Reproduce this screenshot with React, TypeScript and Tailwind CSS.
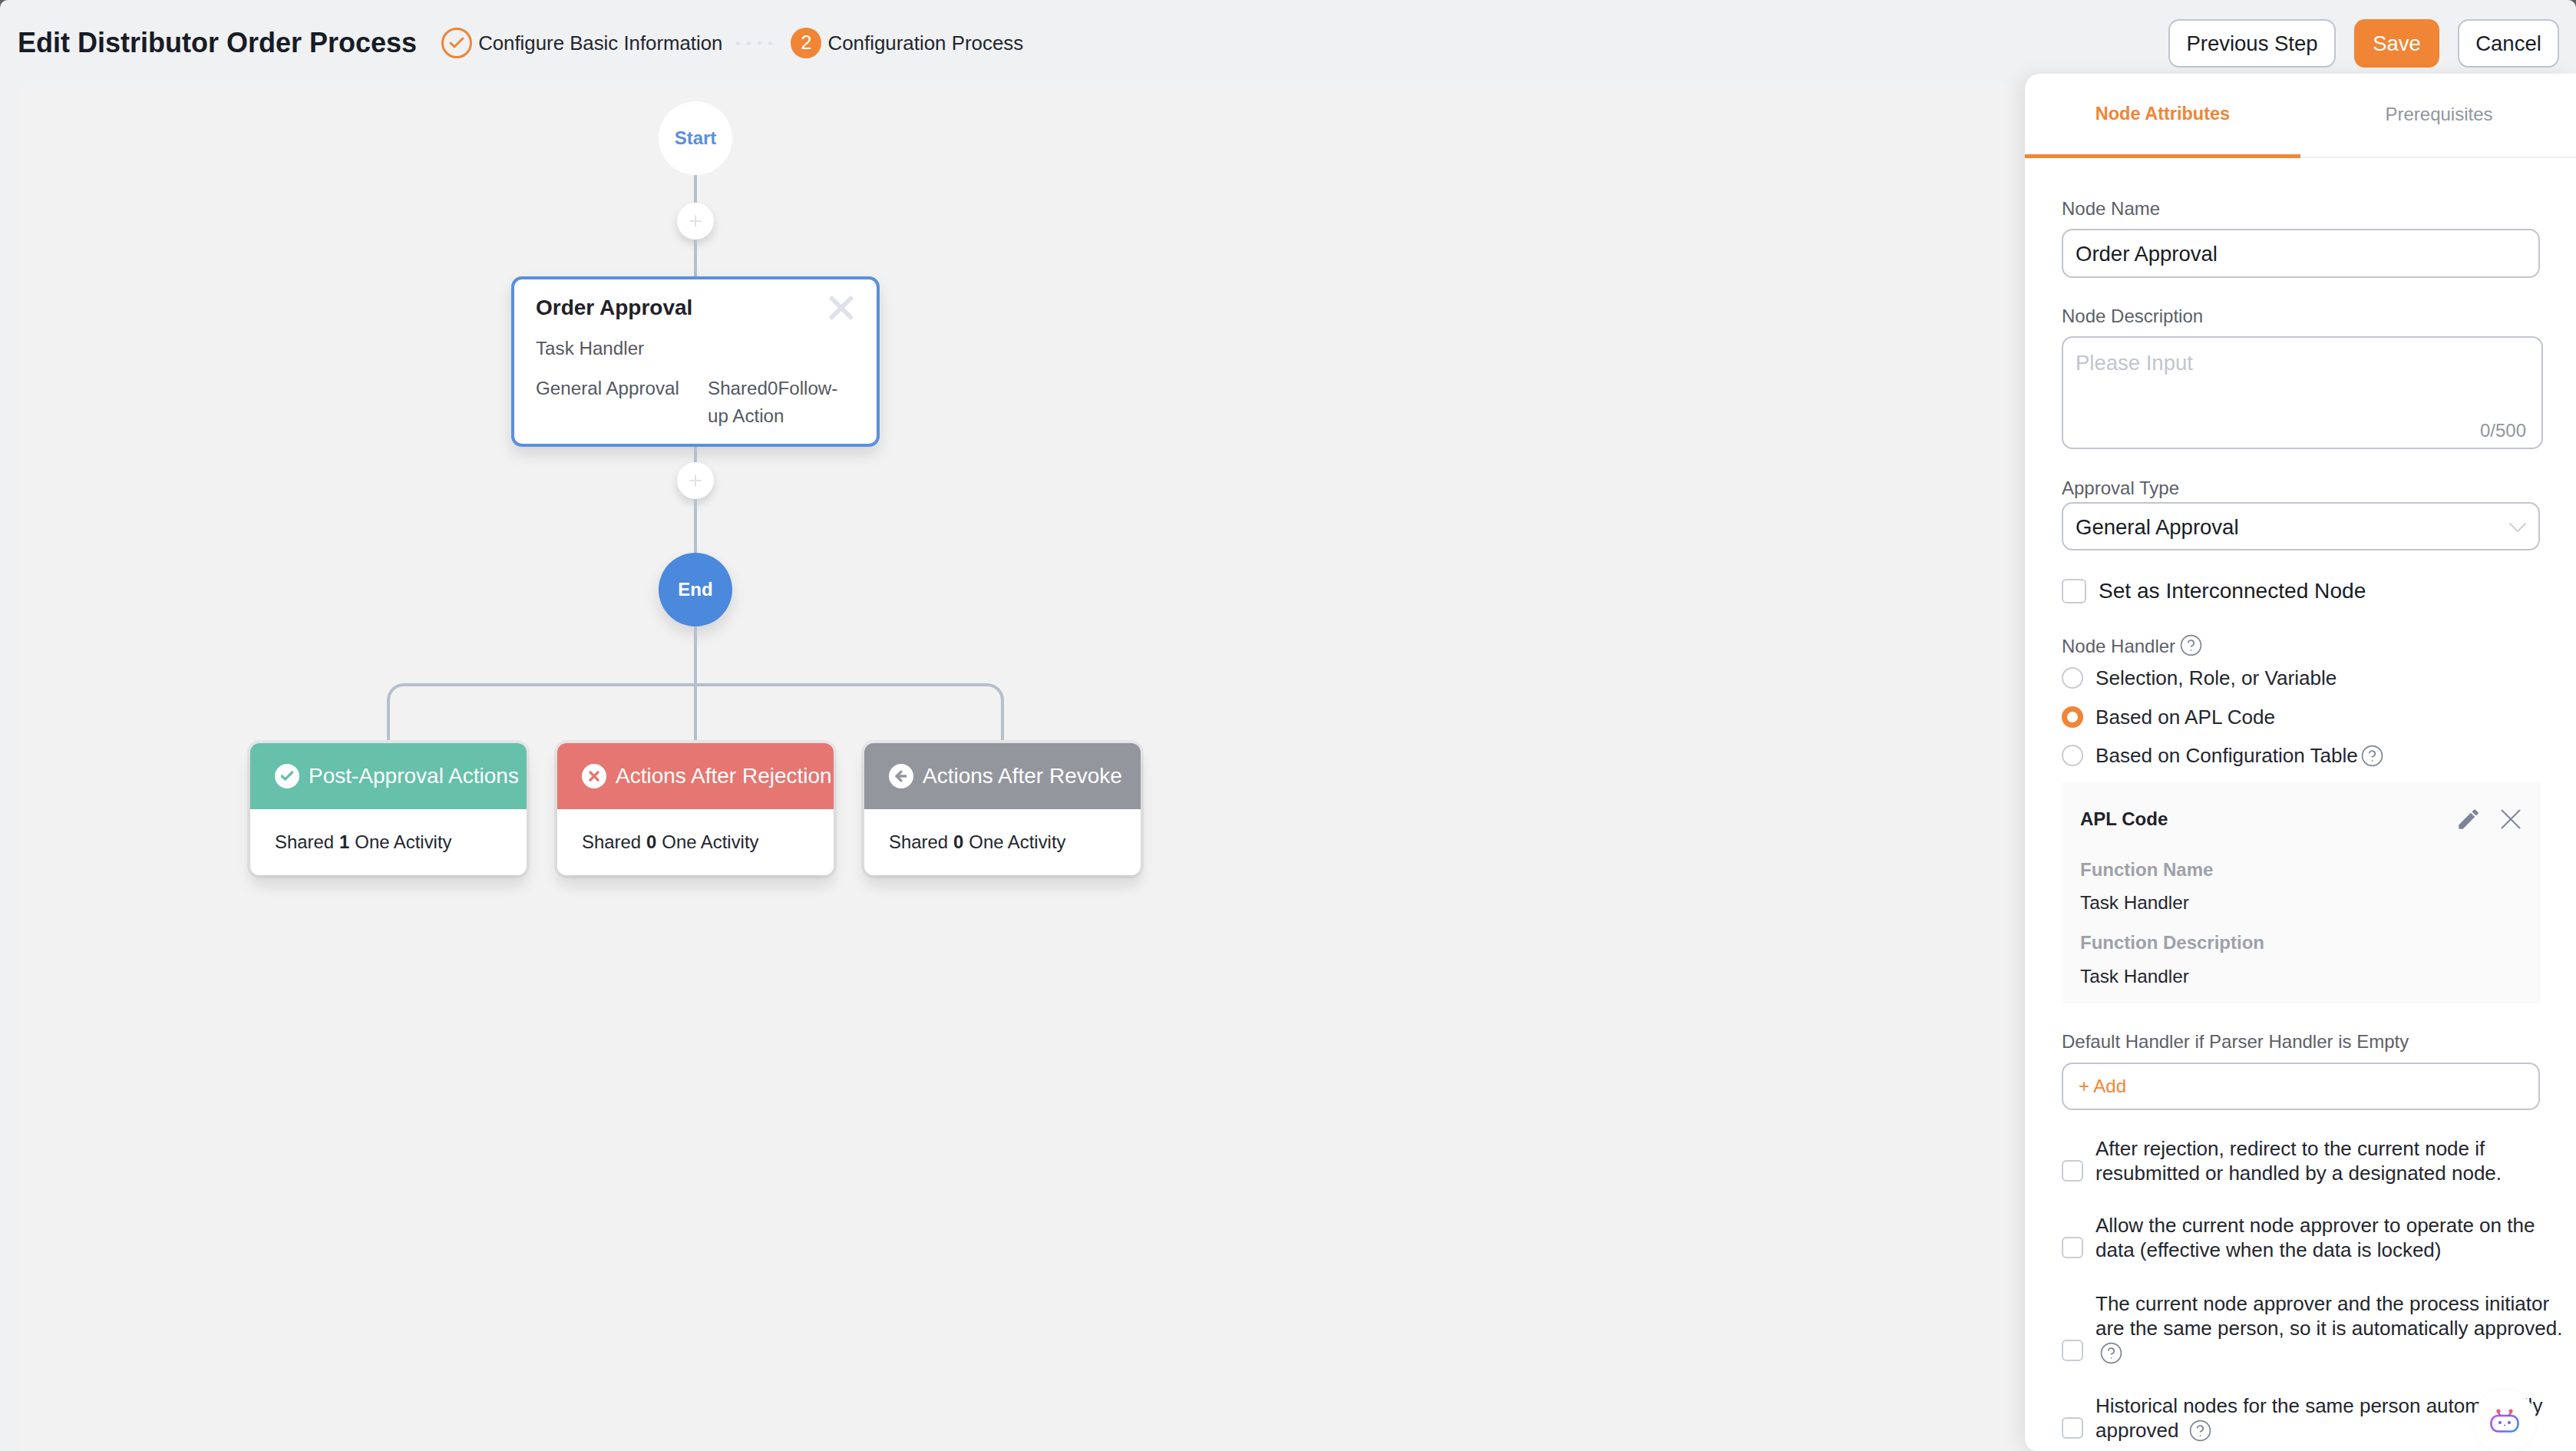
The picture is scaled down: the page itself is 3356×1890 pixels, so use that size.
import { ChevronDown, Check, CircleHelp, Plus, X, ArrowLeft } from "lucide-react";
import { MdEdit } from "react-icons/md";
import type { ReactNode } from "react";

const Help = ({ className = "" }: { className?: string }) => (
  <CircleHelp className={`shrink-0 text-[#7d8496] ${className}`} size={31} strokeWidth={1.3} />
);

const AddButton = () => (
  <div className="flex h-12 w-12 items-center justify-center rounded-full bg-white shadow-[0_6px_12px_rgba(0,0,0,0.14)]">
    <Plus size={24} strokeWidth={2} className="text-[#dfe2e9]" />
  </div>
);

const Line = ({ height }: { height: string }) => <div className={`w-1 bg-[#b4c0cd] ${height}`} />;

const branches = [
  { title: "Post-Approval Actions", count: 1, bg: "bg-[#66c0aa]", fg: "text-[#66c0aa]", icon: <Check size={20} strokeWidth={4} /> },
  { title: "Actions After Rejection", count: 0, bg: "bg-[#e67672]", fg: "text-[#e67672]", icon: <X size={20} strokeWidth={4} /> },
  { title: "Actions After Revoke", count: 0, bg: "bg-[#94969e]", fg: "text-[#94969e]", icon: <ArrowLeft size={20} strokeWidth={4} /> },
];

const BranchCard = ({ title, count, bg, fg, icon }: (typeof branches)[number]) => (
  <div className="w-[360px] overflow-hidden rounded-xl bg-white shadow-[0_0_0_4px_rgba(0,0,0,0.05),0_14px_18px_rgba(0,0,0,0.1)]">
    <div className={`flex h-[86px] items-center gap-3 whitespace-nowrap pl-8 text-[28px] text-white ${bg}`}>
      <span className={`flex h-8 w-8 shrink-0 items-center justify-center rounded-full bg-white ${fg}`}>{icon}</span>
      {title}
    </div>
    <div className="flex h-[86px] items-center gap-[7px] pl-8 text-[23.9px] text-[#23262e]">
      Shared <b>{count}</b> One Activity
    </div>
  </div>
);

const Flow = () => (
  <div className="ml-[303px] flex w-[1160px] flex-col items-center">
    <div className="flex h-24 w-24 items-center justify-center rounded-full bg-white text-[24px] font-bold text-[#5a8fdd]">Start</div>
    <Line height="h-9" />
    <AddButton />
    <Line height="h-12" />
    <div className="h-[222px] w-[480px] rounded-[14px] border-4 border-[#5a90dc] bg-white pl-7 pr-[21px] pt-[17px] shadow-[0_10px_20px_rgba(0,0,0,0.12)]">
      <div className="flex h-[40px] items-center justify-between">
        <span className="text-[28px] font-bold text-[#1f2229]">Order Approval</span>
        <X size={50} strokeWidth={2.8} className="-my-3 text-[#dfe2e9]" />
      </div>
      <div className="mt-[15px] text-[24.2px] leading-9 text-[#545861]">Task Handler</div>
      <div className="mt-[16px] flex text-[24.2px] leading-9 text-[#545861]">
        <span className="w-[224px]">General Approval</span>
        <span className="w-[180px]">Shared0Follow-up Action</span>
      </div>
    </div>
    <Line height="h-5" />
    <AddButton />
    <Line height="h-[70px]" />
    <div className="flex h-24 w-24 items-center justify-center rounded-full bg-[#4a89dc] text-[24px] font-bold text-white shadow-[0_10px_20px_rgba(0,0,0,0.12)]">End</div>
    <Line height="h-[74px]" />
    <div className="flex h-[74px] w-[804px] justify-center rounded-t-[22px] border-x-4 border-t-4 border-[#b4c0cd]">
      <div className="w-1 bg-[#b4c0cd]" />
    </div>
    <div className="mt-1 flex gap-10">
      {branches.map((b) => (
        <BranchCard key={b.title} {...b} />
      ))}
    </div>
  </div>
);

const Label = ({ children, className = "" }: { children: ReactNode; className?: string }) => (
  <div className={`flex h-9 items-center gap-[5px] text-[24px] text-[#5c6068] ${className}`}>{children}</div>
);

const Radio = ({ label, checked, className = "", help }: { label: string; checked?: boolean; className?: string; help?: boolean }) => (
  <div className={`flex h-9 items-center text-[26.1px] text-[#23262e] ${className}`}>
    <span className={`mr-[16px] h-7 w-7 shrink-0 rounded-full bg-white ${checked ? "border-[7px] border-[#f08535]" : "border-2 border-[#c8ccd5]"}`} />
    <span className="pt-[2px]">{label}</span>
    {help && <Help className="ml-[3px]" />}
  </div>
);

const CheckRow = ({ lines, help, className = "" }: { lines: string[]; help?: "own" | "inline"; className?: string }) => (
  <div className={`flex items-end ${className}`}>
    <span className="mb-[5px] h-7 w-7 shrink-0 rounded-[6px] border-2 border-[#c8ccd5] bg-white" />
    <div className="ml-[16px] whitespace-nowrap text-[26px] leading-8 text-[#23262e]">
      {lines.map((l, i) => (
        <div key={l} className="flex items-center">
          {l}
          {help === "inline" && i === lines.length - 1 && <Help className="ml-[13px]" />}
        </div>
      ))}
      {help === "own" && (
        <div className="flex h-8 items-center pl-[5px]">
          <Help />
        </div>
      )}
    </div>
  </div>
);

const Panel = () => (
  <aside className="relative h-[1794px] w-[718px] shrink-0 overflow-hidden rounded-tl-[20px] rounded-bl-[16px] bg-white shadow-[-10px_0_22px_rgba(0,0,0,0.07)]">
    <div className="flex h-[110px] border-b-2 border-[#eeeff1] text-[24px]">
      <div className="-mb-[2px] flex w-[360px] items-center justify-center border-b-[5px] border-[#f08535] text-[23.5px] font-bold text-[#f08535]">
        Node Attributes
      </div>
      <div className="flex w-[360px] items-center justify-center pb-[3px] pl-[2px] text-[#91959e]">Prerequisites</div>
    </div>

    <div className="ml-[48px] w-[627px]">
      <Label className="mt-[48px]">Node Name</Label>
      <div className="mt-2 flex h-16 w-[623px] items-center rounded-[14px] border-2 border-[#c1c5cf] pl-[16px] pt-[2px] text-[27.5px] text-[#181c25]">Order Approval</div>

      <Label className="mt-8">Node Description</Label>
      <div className="relative mt-2 h-[147px] rounded-[14px] border-2 border-[#c1c5cf] pl-[16px] pt-[15px] text-[27.5px] leading-9 text-[#c1c5cf]">
        Please Input
        <span className="absolute bottom-[4px] right-[20px] text-[24px] leading-9 text-[#91959e]">0/500</span>
      </div>

      <Label className="mt-[33px]">Approval Type</Label>
      <div className="flex h-[63px] w-[623px] items-center justify-between rounded-[14px] border-2 border-[#c1c5cf] pl-[16px] pr-[7px] pt-[2px] text-[27.5px] text-[#181c25]">
        General Approval
        <ChevronDown size={40} strokeWidth={1} className="-my-2 text-[#c1c5cf]" />
      </div>

      <div className="mt-[35px] flex h-9 items-center text-[28.1px] text-[#181c25]">
        <span className="mr-[16px] h-[32px] w-[32px] rounded-[6px] border-2 border-[#c8ccd5]" />
        <span className="pt-[1px]">Set as Interconnected Node</span>
      </div>

      <Label className="mt-[36px]">
        Node Handler
        <Help className="-mt-1" />
      </Label>
      <Radio className="mt-[5px]" label="Selection, Role, or Variable" />
      <Radio className="mt-[15px]" label="Based on APL Code" checked />
      <Radio className="mt-[14px]" label="Based on Configuration Table" help />

      <div className="mt-[17px] h-[288px] w-[624px] bg-[#fafafa] pl-[24px] pr-[16px] pt-[28px] text-[24.3px] text-[#23262e]">
        <div className="flex h-10 items-center justify-between">
          <b className="text-[24px] text-[#1f2229]">APL Code</b>
          <div className="flex items-center gap-[15px]">
            <MdEdit size={34} className="text-[#7d8496]" />
            <X size={46} strokeWidth={1} className="-my-2 text-[#7d8496]" />
          </div>
        </div>
        <div className="mt-[28px] flex h-9 items-center text-[24px] font-bold text-[#9ea1aa]">Function Name</div>
        <div className="mt-[7px] flex h-9 items-center">Task Handler</div>
        <div className="mt-4 flex h-9 items-center text-[24px] font-bold text-[#9ea1aa]">Function Description</div>
        <div className="mt-2 flex h-9 items-center">Task Handler</div>
      </div>

      <Label className="mt-[32px]">Default Handler if Parser Handler is Empty</Label>
      <div className="mt-[9px] flex h-[62px] w-[623px] items-center rounded-[14px] border-2 border-[#c1c5cf] pl-[20px] text-[24px] text-[#f08535]">+ Add</div>

      <CheckRow className="mt-[34px]" lines={["After rejection, redirect to the current node if", "resubmitted or handled by a designated node."]} />
      <CheckRow className="mt-[36px]" lines={["Allow the current node approver to operate on the", "data (effective when the data is locked)"]} />
      <CheckRow className="mt-[38px]" help="own" lines={["The current node approver and the process initiator", "are the same person, so it is automatically approved."]} />
      <CheckRow className="mt-[37px]" help="inline" lines={["Historical nodes for the same person automatically", "approved"]} />
    </div>

    {/* floating assistant */}
    <div className="absolute left-[584px] top-[1714px] flex h-[82px] w-[82px] items-center justify-center rounded-full bg-white pb-[2px] shadow-[0_0_10px_rgba(0,0,0,0.03)]">
      <svg width="38" height="32" viewBox="0 0 38 32" fill="none">
        <defs>
          <linearGradient id="bot" x1="4" y1="8" x2="30" y2="32" gradientUnits="userSpaceOnUse">
            <stop offset="0" stopColor="#c44fe8" />
            <stop offset="0.55" stopColor="#8a5af5" />
            <stop offset="1" stopColor="#3d8cf5" />
          </linearGradient>
        </defs>
        <path d="M14 10 10.5 6M24 10l3.5-4" stroke="#b04fe0" strokeWidth="2" strokeLinecap="round" />
        <circle cx="11" cy="4" r="2.6" fill="#ee5c78" />
        <circle cx="27" cy="4" r="2.6" fill="#ee5c78" />
        <rect x="1.5" y="10" width="35" height="20.5" rx="9" stroke="url(#bot)" strokeWidth="2.6" />
        <circle cx="13" cy="19" r="2" fill="#6a5cf0" />
        <circle cx="25" cy="19" r="2" fill="#6a5cf0" />
        <circle cx="19" cy="22.5" r="1" fill="#6a5cf0" />
      </svg>
    </div>
  </aside>
);

export default function App() {
  return (
    <div className="h-[1890px] w-[3356px] overflow-hidden bg-[#5f6064] font-['Liberation_Sans',Arial,sans-serif]">
      <div className="flex h-full flex-col overflow-hidden rounded-t-[10px] bg-[#f0f1f3]">
        <header className="flex h-[96px] shrink-0 items-center pl-[23px] pr-[22px] pt-[16px]">
          <h1 className="text-[36px] font-bold text-[#181c25]">Edit Distributor Order Process</h1>
          <div className="ml-[32px] flex h-10 w-10 items-center justify-center rounded-full border-[3px] border-[#f08535]">
            <Check size={24} strokeWidth={3} className="text-[#f08535]" />
          </div>
          <span className="ml-[8px] text-[25.8px] text-[#23262e]">Configure Basic Information</span>
          <div className="ml-[18px] flex w-[47px] justify-between">
            <i className="h-[5px] w-[5px] rounded-full bg-[#dfe2e9]" />
            <i className="h-[5px] w-[5px] rounded-full bg-[#dfe2e9]" />
            <i className="h-[5px] w-[5px] rounded-full bg-[#dfe2e9]" />
            <i className="h-[5px] w-[5px] rounded-full bg-[#dfe2e9]" />
          </div>
          <div className="ml-[24px] flex h-10 w-10 items-center justify-center rounded-full bg-[#f08535] text-[25px] text-white">2</div>
          <span className="ml-[8px] text-[25.9px] text-[#23262e]">Configuration Process</span>
          <div className="ml-auto flex gap-[24px] text-[27.5px]">
            <button className="h-[63px] w-[218px] rounded-[14px] border-2 border-[#c1c5cf] bg-white pt-[2px] text-[#181c25]">Previous Step</button>
            <button className="h-[63px] w-[111px] rounded-[14px] bg-[#f08535] pt-[2px] text-white">Save</button>
            <button className="h-[63px] w-[132px] rounded-[14px] border-2 border-[#c1c5cf] bg-white pt-[2px] text-[#181c25]">Cancel</button>
          </div>
        </header>
        <div className="flex min-h-0 flex-1">
          <main className="ml-[23px] mt-[16px] min-w-0 flex-1 rounded-tl-[14px] bg-[#f2f2f2] pt-[20px]">
            <Flow />
          </main>
          <Panel />
        </div>
      </div>
    </div>
  );
}
